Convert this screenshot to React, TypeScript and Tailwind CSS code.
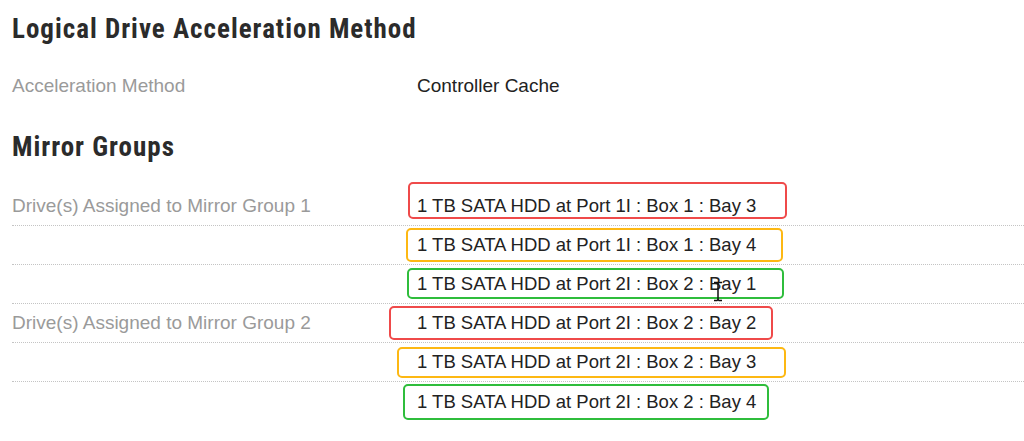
import React from 'react'

interface DriveRow {
  label?: string
  value: string
  box: string
}

// annotation boxes drawn over the values, offsets measured from the row
const rows: DriveRow[] = [
  { label: 'Drive(s) Assigned to Mirror Group 1', value: '1 TB SATA HDD at Port 1I : Box 1 : Bay 3', box: 'border-[#ef4a4a] -left-[9px] w-[379px] -top-[5px] h-[37px]' },
  { value: '1 TB SATA HDD at Port 1I : Box 1 : Bay 4', box: 'border-[#fdb813] -left-[11px] w-[377px] top-[2px] h-[34px]' },
  { value: '1 TB SATA HDD at Port 2I : Box 2 : Bay 1', box: 'border-[#2fbd3c] -left-[10px] w-[377px] top-[3px] h-[31px]' },
  { label: 'Drive(s) Assigned to Mirror Group 2', value: '1 TB SATA HDD at Port 2I : Box 2 : Bay 2', box: 'border-[#ef4a4a] -left-[28px] w-[384px] top-[2px] h-[34px]' },
  { value: '1 TB SATA HDD at Port 2I : Box 2 : Bay 3', box: 'border-[#fdb813] -left-[20px] w-[389px] top-[4px] h-[31px]' },
  { value: '1 TB SATA HDD at Port 2I : Box 2 : Bay 4', box: 'border-[#2fbd3c] -left-[14px] w-[366px] top-[2px] h-[36px]' },
]

const IBeam: React.FC = () => (
  <svg className="absolute left-[295px] top-[16px]" width="12" height="22" viewBox="0 0 12 22">
    <path d="M2 1.5h3l1 1 1-1h3M6 2.5v16M2 19.5h3l1-1 1 1h3" fill="none" stroke="#111" strokeWidth="1.5" />
  </svg>
)

const headingFont = { fontFamily: '"Roboto Condensed", Roboto, sans-serif' }

export default function App() {
  return (
    <div className="w-[1024px] h-[441px] bg-white pl-3 overflow-hidden" style={{ fontFamily: '"Liberation Sans", Arial, sans-serif' }}>
      <h2 className="h-[58px] flex items-center text-[27px] font-bold tracking-[1px] text-[#2b2b2b]" style={headingFont}>
        Logical Drive Acceleration Method
      </h2>
      <div className="h-[56px] flex items-center">
        <div className="w-[405px] text-[19px] text-[#9a9a9a]">Acceleration Method</div>
        <div className="text-[19px] text-[#222]">Controller Cache</div>
      </div>
      <h2 className="h-[66px] flex items-center text-[27px] font-bold tracking-[1px] text-[#2b2b2b]" style={headingFont}>
        Mirror Groups
      </h2>
      <div className="mt-[7px]">
        {rows.map((r, i) => (
          <div
            key={i}
            className={`h-[39px] flex items-center ${i === rows.length - 1 ? '' : 'border-b border-dotted border-[#c4c4c4]'}`}
          >
            <div className="w-[405px] text-[19px] text-[#9a9a9a]">{r.label}</div>
            <div className="relative flex-1 h-full flex items-center text-[18.5px] text-[#222]">
              <span className={`absolute border-2 rounded-[5px] ${r.box}`} />
              <span className="relative">{r.value}</span>
              {i === 2 && <IBeam />}
            </div>
          </div>
        ))}
      </div>
    </div>
  )
}
